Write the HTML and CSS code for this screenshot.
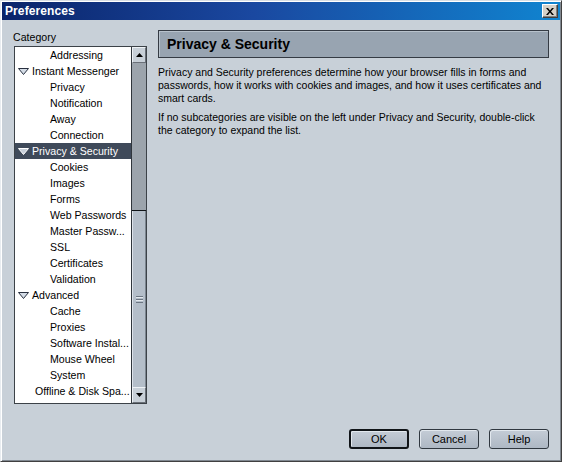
FILE: index.html
```html
<!DOCTYPE html>
<html>
<head>
<meta charset="utf-8">
<title>Preferences</title>
<link rel="stylesheet" href="styles.css">
</head>
<body>
<div class="window">
  <div class="titlebar">
    <span class="title">Preferences</span>
    <span class="close"><svg width="8" height="7" viewBox="0 0 8 7"><path d="M0 0h2l2 2.5L6 0h2L5 3.5 8 7H6L4 4.5 2 7H0l3-3.5z" fill="#000"/></svg></span>
  </div>
  <div class="body">
    <div class="left">
      <div class="label">Category</div>
      <div class="tree">
        <div class="rows">
          <div class="row l2">Addressing</div>
          <div class="row l1"><svg class="twisty" width="11" height="7" viewBox="0 0 11 7"><path d="M0.5 0.5h10L5.5 6.5z" fill="#d4dce6" stroke="#283040"/></svg>Instant Messenger</div>
          <div class="row l2">Privacy</div>
          <div class="row l2">Notification</div>
          <div class="row l2">Away</div>
          <div class="row l2">Connection</div>
          <div class="row l1 sel"><svg class="twisty" width="11" height="7" viewBox="0 0 11 7"><path d="M0.5 0.5h10L5.5 6.5z" fill="#c8d0da" stroke="#ffffff"/></svg>Privacy &amp; Security</div>
          <div class="row l2">Cookies</div>
          <div class="row l2">Images</div>
          <div class="row l2">Forms</div>
          <div class="row l2">Web Passwords</div>
          <div class="row l2">Master Passw...</div>
          <div class="row l2">SSL</div>
          <div class="row l2">Certificates</div>
          <div class="row l2">Validation</div>
          <div class="row l1"><svg class="twisty" width="11" height="7" viewBox="0 0 11 7"><path d="M0.5 0.5h10L5.5 6.5z" fill="#d4dce6" stroke="#283040"/></svg>Advanced</div>
          <div class="row l2">Cache</div>
          <div class="row l2">Proxies</div>
          <div class="row l2">Software Instal...</div>
          <div class="row l2">Mouse Wheel</div>
          <div class="row l2">System</div>
          <div class="row l1 leaf">Offline &amp; Disk Spa...</div>
        </div>
        <div class="scrollbar">
          <div class="sbtn"><svg width="7" height="4" viewBox="0 0 7 4"><path d="M3.5 0L7 4H0z" fill="#000"/></svg></div>
          <div class="track"></div>
          <div class="thumb"><span class="grip"></span></div>
          <div class="sbtn"><svg width="7" height="4" viewBox="0 0 7 4"><path d="M0 0h7L3.5 4z" fill="#000"/></svg></div>
        </div>
      </div>
    </div>
    <div class="right">
      <div class="header">Privacy &amp; Security</div>
      <p class="p1">Privacy and Security preferences determine how your browser fills in forms and passwords, how it works with cookies and images, and how it uses certificates and smart cards.</p>
      <p class="p2">If no subcategories are visible on the left under Privacy and Security, double-click the category to expand the list.</p>
    </div>
  </div>
  <div class="footer">
    <button class="btn default">OK</button>
    <button class="btn">Cancel</button>
    <button class="btn">Help</button>
  </div>
</div>
</body>
</html>
```
FILE: styles.css
```css
html, body {
  margin: 0;
  padding: 0;
}
body {
  width: 562px;
  height: 462px;
  overflow: hidden;
  font-family: "Liberation Sans", Arial, sans-serif;
  font-size: 10.5px;
  color: #000;
}
.window {
  box-sizing: border-box;
  width: 562px;
  height: 462px;
  background: #c8d0d8;
  border-top: 1px solid #d8dee4;
  border-left: 1px solid #e8ecf0;
  border-right: 1px solid #404040;
  border-bottom: 1px solid #404040;
  box-shadow: inset 1px 1px 0 #ffffff, inset -1px -1px 0 #808890;
  padding: 1px;
  display: flex;
  flex-direction: column;
}
.titlebar {
  height: 18px;
  background: linear-gradient(to right, #0a246a 0%, #1a48a0 45%, #1084d0 100%);
  display: flex;
  align-items: center;
  justify-content: space-between;
  padding: 0 2px 0 3px;
}
.title {
  color: #fff;
  font-weight: bold;
  font-size: 12px;
  letter-spacing: 0.1px;
}
.close {
  width: 16px;
  height: 14px;
  box-sizing: border-box;
  background: #d4d0c8;
  border-top: 1px solid #ffffff;
  border-left: 1px solid #ffffff;
  border-right: 1px solid #404040;
  border-bottom: 1px solid #404040;
  box-shadow: inset -1px -1px 0 #808080;
  display: flex;
  align-items: center;
  justify-content: center;
}
.body {
  flex: 1;
  display: flex;
  gap: 11px;
  padding: 10px 11px 0 12px;
}
.left {
  width: 133px;
  display: flex;
  flex-direction: column;
}
.label {
  height: 16px;
  line-height: 14px;
  font-size: 10.6px;
  margin-left: -1px;
}
.tree {
  box-sizing: border-box;
  height: 358px;
  border: 1px solid #3c4248;
  background: #fff;
  display: flex;
}
.rows {
  flex: 1;
  overflow: hidden;
  font-size: 10.6px;
}
.row {
  height: 16px;
  line-height: 16px;
  white-space: nowrap;
  display: flex;
  align-items: center;
}
.row.l2 {
  padding-left: 35px;
}
.row.l1 {
  padding-left: 3px;
}
.row.leaf {
  padding-left: 20px;
}
.twisty {
  margin-right: 3px;
  margin-top: 1px;
}
.row.sel {
  background: #3f4a5a;
  color: #fff;
}
.scrollbar {
  width: 14px;
  border-left: 1px solid #30363c;
  display: flex;
  flex-direction: column;
  background: #c8d0d8;
}
.sbtn {
  box-sizing: border-box;
  height: 16px;
  background: #c8d0d8;
  border-top: 1px solid #eef2f6;
  border-left: 1px solid #eef2f6;
  border-right: 1px solid #6a7078;
  border-bottom: 1px solid #6a7078;
  display: flex;
  align-items: center;
  justify-content: center;
}
.track {
  height: 147px;
  background: #9ca4ac;
  border-bottom: 1px solid #101418;
}
.thumb {
  flex: 1;
  box-sizing: border-box;
  background: #b4bec9;
  border-left: 1px solid #dde3ea;
  border-right: 1px solid #7c8690;
  display: flex;
  align-items: center;
  justify-content: center;
}
.grip {
  width: 7px;
  height: 7px;
  background: repeating-linear-gradient(to bottom, #6c7682 0 1px, #e4e9ee 1px 2px, transparent 2px 3px);
}
.right {
  width: 391px;
}
.header {
  box-sizing: border-box;
  height: 28px;
  border: 1px solid #353b44;
  box-shadow: inset 1px 1px 0 #b8c2cc;
  background: #98a4b1;
  font-weight: bold;
  font-size: 14px;
  line-height: 26px;
  padding-left: 8px;
}
p {
  margin: 0;
  line-height: 13px;
}
.p1 {
  margin-top: 8px;
}
.p2 {
  margin-top: 6px;
}
.footer {
  display: flex;
  justify-content: flex-end;
  gap: 10px;
  padding: 0 11px 11px 0;
}
.btn {
  box-sizing: border-box;
  width: 60px;
  height: 20px;
  font-family: "Liberation Sans", Arial, sans-serif;
  font-size: 11px;
  color: #000;
  background: linear-gradient(to bottom, #c4ccd6, #aeb8c4);
  border: 1px solid #303840;
  border-radius: 3px;
  box-shadow: inset 1px 1px 0 #e2e8ee;
  padding: 0;
}
.btn.default {
  border: 2px solid #101418;
}
```
